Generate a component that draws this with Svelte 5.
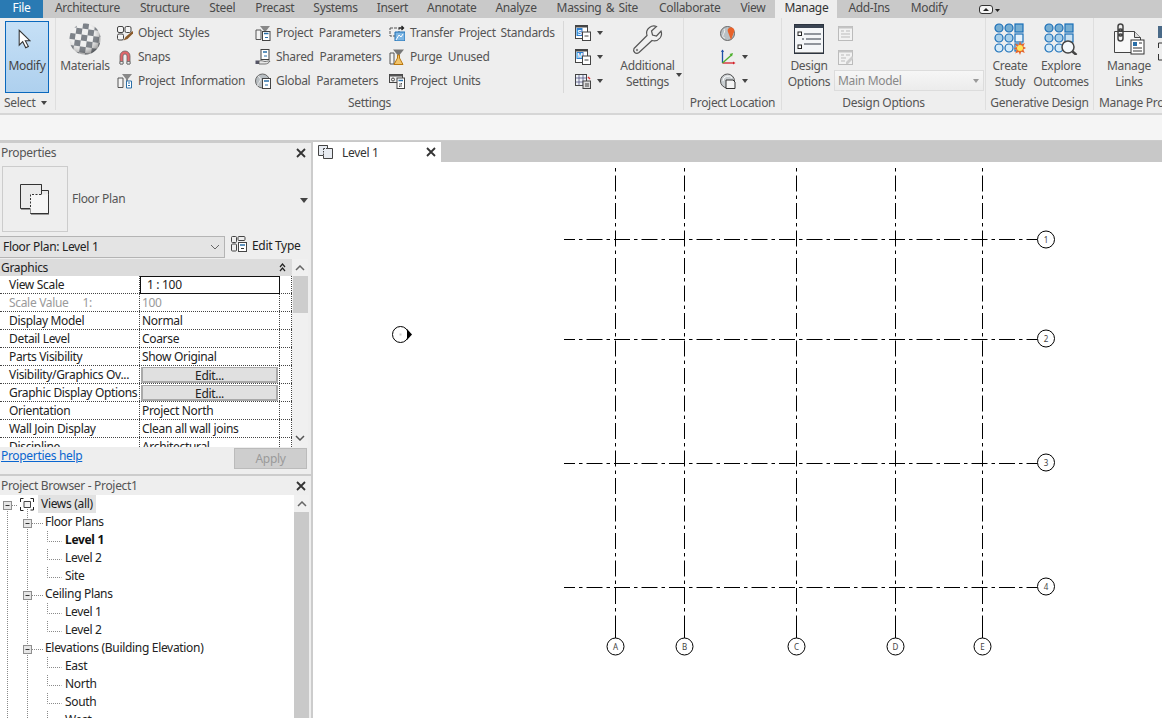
<script>
  const tabs = [
    {t:'Architecture'},{t:'Structure'},{t:'Steel'},{t:'Precast'},{t:'Systems',n:-1},{t:'Insert',n:-1},{t:'Annotate',n:-1},
    {t:'Analyze',n:-1},{t:'Massing & Site',wide:true},{t:'Collaborate',n:1},{t:'View'},{t:'Manage'},{t:'Add-Ins',n:1},{t:'Modify',n:1}
  ];
  const rows = [
    {k:'View Scale', v:'1 : 100', kind:'active'},
    {k:'Scale Value     1:', v:'100', kind:'off'},
    {k:'Display Model', v:'Normal'},
    {k:'Detail Level', v:'Coarse'},
    {k:'Parts Visibility', v:'Show Original'},
    {k:'Visibility/Graphics Ov...', v:'Edit...', kind:'btn'},
    {k:'Graphic Display Options', v:'Edit...', kind:'btn'},
    {k:'Orientation', v:'Project North'},
    {k:'Wall Join Display', v:'Clean all wall joins'},
    {k:'Discipline', v:'Architectural'}
  ];
  const tree = [
    {t:'Views (all)', l:0},{t:'Floor Plans', l:1},{t:'Level 1', l:2, b:true},{t:'Level 2', l:2},{t:'Site', l:2},
    {t:'Ceiling Plans', l:1},{t:'Level 1', l:2},{t:'Level 2', l:2},{t:'Elevations (Building Elevation)', l:1},
    {t:'East', l:2},{t:'North', l:2},{t:'South', l:2},{t:'West', l:2}
  ];
  const gridX = [615.5,684.5,796.5,895.5,982.5];
  const gridLetters = ['A','B','C','D','E'];
  const gridY = [{y:239.5,cy:239,n:'1'},{y:339.5,cy:338,n:'2'},{y:463.5,cy:462,n:'3'},{y:587.5,cy:586,n:'4'}];
  const cy = i => 9 + 18 * i;
  const leafs = tree.map((r,i)=>({...r,i})).filter(r=>r.l===2);
  const toggles = tree.map((r,i)=>({...r,i})).filter(r=>r.l===1);
</script>

<div class="app">
  <nav class="tabs">
    <div class="file">File</div>
    {#each tabs as t}
      <div class="tab" class:on={t.t==='Manage'} class:wide={t.wide} style:margin-left={t.n ? t.n + 'px' : null}>{t.t}</div>
    {/each}
    <div class="qa">
      <svg width="22" height="12" viewBox="0 0 22 12"><rect x="1.500" y="1.500" width="13" height="8" rx="2.500" fill="#f4f4f4" stroke="#333"/><path d="M5 7l3-3 3 3z" fill="#222"/><path d="M17 5h5l-2.500 3z" fill="#222"/></svg>
    </div>
  </nav>

  <section class="ribbon">
    <div class="group g-select">
      <div class="body">
        <div class="modify">
          <svg width="14" height="21" viewBox="0 0 16 24"><path d="M2.500 1.500v17l4-4 3.500 7 3-1.500-3.500-6.500h5.500z" fill="#fff" stroke="#333" stroke-width="1.200"/></svg>
          <span>Modify</span>
        </div>
      </div>
      <div class="label sel">Select <i class="arr"></i></div>
    </div>

    <div class="group g-settings">
      <div class="body">
        <div class="big materials">
          <svg width="32" height="32" viewBox="0 0 32 32">
            <defs>
              <pattern id="chk" width="12" height="12" patternUnits="userSpaceOnUse" patternTransform="rotate(8 16 16)"><rect width="12" height="12" fill="#eee"/><rect width="6" height="6" fill="#666c74"/><rect x="6" y="6" width="6" height="6" fill="#666c74"/></pattern>
              <radialGradient id="shade" cx=".4" cy=".35" r=".7"><stop offset=".5" stop-color="#fff" stop-opacity=".15"/><stop offset="1" stop-color="#333" stop-opacity=".55"/></radialGradient>
            </defs>
            <circle cx="16" cy="16" r="15.500" fill="url(#chk)"/><circle cx="16" cy="16" r="15.500" fill="url(#shade)"/>
          </svg>
          <span>Materials</span>
        </div>

        <div class="col c1">
          <div class="item">
            <svg class="ic" viewBox="0 0 16 16"><rect x=".5" y="1.500" width="6" height="6" rx="1.500" fill="#f5f5f5" stroke="#444"/><rect x="8" y="1.500" width="6" height="6" rx="1.500" fill="#f5f5f5" stroke="#444"/><rect x=".5" y="9" width="6" height="6" rx="1.500" fill="#f5f5f5" stroke="#444"/><path d="M15.500 6l-7 6-2 3.500 4-1.500 6-6z" fill="#8a5a2a"/></svg>
            <span>Object Styles</span>
          </div>
          <div class="item">
            <svg class="ic" viewBox="0 0 16 16"><path d="M3 15V7a5 5 0 0 1 10 0v8h-3V7a2 2 0 0 0-4 0v8z" fill="#e0676b" stroke="#666" stroke-width=".8"/><path d="M3 15h3v-2.500H3zM10 15h3v-2.500h-3z" fill="#eee" stroke="#666" stroke-width=".8"/></svg>
            <span>Snaps</span>
          </div>
          <div class="item">
            <svg class="ic" viewBox="0 0 16 16"><path d="M1 5h5v9.500H1z" fill="#f3f3f3" stroke="#555"/><path d="M5 1h10l-4 5v3H9V6z" fill="#888"/><path d="M9.500 8h5v7h-5z" fill="#fff" stroke="#2a6fa8"/><path d="M11 10h2M11 12.500h2" stroke="#2a6fa8"/></svg>
            <span>Project Information</span>
          </div>
        </div>

        <div class="col c2">
          <div class="item">
            <svg class="ic" viewBox="0 0 16 16"><path d="M1 5h5v9.500H1z" fill="#f3f3f3" stroke="#555"/><path d="M5 1h10l-4 5H9z" fill="#888"/><rect x="7.500" y="6.500" width="7.500" height="9" fill="#fff" stroke="#444"/><path d="M9 8.500h4.500" stroke="#2a6fa8" stroke-width="1.500"/><path d="M10 12.500h3" stroke="#2a6fa8"/></svg>
            <span>Project Parameters</span>
          </div>
          <div class="item">
            <svg class="ic" viewBox="0 0 16 16"><rect x="6" y=".5" width="8" height="10" fill="#fff" stroke="#444"/><path d="M8 3h4" stroke="#2a6fa8" stroke-width="1.500"/><path d="M9 7h3" stroke="#2a6fa8"/><path d="M.5 11.500h3.500v3.500H.5z" fill="#556" /><path d="M4 12c3-1 4 .5 6 .5s4-1 5-.5c-1 2-3 3-5 3H4z" fill="#e8e8e8" stroke="#555" stroke-width=".8"/></svg>
            <span>Shared Parameters</span>
          </div>
          <div class="item">
            <svg class="ic" viewBox="0 0 16 16"><circle cx="7.500" cy="8" r="7" fill="#b8bec2" stroke="#666"/><path d="M3 3c2 1 3 3 2 5S2 11 3 13" stroke="#eee" fill="none"/><rect x="7.500" y="5.500" width="8" height="10" fill="#fff" stroke="#444"/><path d="M9 8h5" stroke="#2a6fa8" stroke-width="1.500"/><path d="M10 12h3" stroke="#2a6fa8"/></svg>
            <span>Global Parameters</span>
          </div>
        </div>

        <div class="col c3">
          <div class="item">
            <svg class="ic" viewBox="0 0 16 16"><path d="M1 3h9v8H1z" fill="#eee" stroke="#555" stroke-dasharray="3 1"/><path d="M6 7h10v9H6z" fill="#7db6e4" stroke="#1f6fb2"/><path d="M7 15l3-5 2 2 2-3" stroke="#fff" fill="none"/><path d="M10 3h4M12.500 1l2 2-2 2" stroke="#222" fill="none" stroke-width="1.300"/></svg>
            <span>Transfer Project Standards</span>
          </div>
          <div class="item">
            <svg class="ic" viewBox="0 0 16 16"><path d="M1 4h4v11H1z" fill="#f3f3f3" stroke="#555"/><path d="M4 .5h11l-4.500 5.500h-2z" fill="#777"/><path d="M8.500 6h2v3l3.500 6.500H5L8.500 9z" fill="#f2c46a" stroke="#b9770e"/></svg>
            <span>Purge Unused</span>
          </div>
          <div class="item">
            <svg class="ic" viewBox="0 0 16 16"><rect x=".5" y="1.500" width="13" height="8" fill="#eee" stroke="#444"/><path d="M.5 1.500h13v2H.5z" fill="#555"/><circle cx="4" cy="6.500" r="1.500" fill="none" stroke="#444"/><rect x="8" y="5" width="7.500" height="10.500" fill="#fff" stroke="#444"/><path d="M9.500 7.500h4.500" stroke="#2a6fa8" stroke-width="1.500"/><path d="M10 11h3l-1-1M13 13h-3l1 1" stroke="#333" fill="none" stroke-width=".8"/></svg>
            <span>Project Units</span>
          </div>
        </div>

        <div class="sep"></div>

        <div class="col c4">
          <div class="item">
            <svg class="ic" viewBox="0 0 16 16"><rect x=".5" y=".5" width="12" height="13" fill="#fff" stroke="#444"/><path d="M.5.500h12v2H.5z" fill="#444"/><rect x="1.500" y="3" width="6" height="8" fill="#2f7fd0"/><text x="4.500" y="10" class="ltr">S</text><rect x="7.500" y="7" width="8" height="8.500" fill="#fff" stroke="#444"/><path d="M9.500 11h4" stroke="#444"/></svg>
            <i class="arr"></i>
          </div>
          <div class="item">
            <svg class="ic" viewBox="0 0 16 16"><rect x=".5" y=".5" width="12" height="13" fill="#fff" stroke="#444"/><path d="M.5.500h12v2H.5z" fill="#444"/><rect x="1.500" y="3" width="7" height="7" fill="#2f7fd0"/><text x="5" y="9" class="ltr">M</text><rect x="7.500" y="7" width="8" height="8.500" fill="#fff" stroke="#444"/><path d="M9.500 11h4" stroke="#444"/></svg>
            <i class="arr"></i>
          </div>
          <div class="item">
            <svg class="ic" viewBox="0 0 16 16"><rect x=".5" y="1.500" width="11" height="11" fill="#eef3f8" stroke="#444"/><path d="M.5 5h11M4 2v10M8 2v10M.5 9h11" stroke="#447" stroke-width=".7"/><rect x="8" y="8" width="7.500" height="7.500" fill="#ddd" stroke="#444"/><path d="M10 11h4M10 13h4" stroke="#444"/><path d="M13 4l2 2" stroke="#d33" stroke-width="1.500"/></svg>
            <i class="arr"></i>
          </div>
        </div>

        <div class="big additional">
          <svg width="32" height="30" viewBox="0 0 32 30"><path d="M2 24.500L15 11.500c-1-3 0-6 2.500-8 2-1.500 4.500-2 7-1l-5 4.500 1 4 4 1 4.500-5c1 2.500.5 5-1 7-2 2.500-5 3.500-8 2.500L7 28.500c-1.500 1-3 1-4.300 0-1.200-1.300-1.200-3 -.7-4z" fill="#f0f0f0" stroke="#555" stroke-width="1.200"/><circle cx="5" cy="26" r="1.200" fill="#888"/></svg>
          <span>Additional<br>Settings</span>
          <i class="arr add"></i>
        </div>
      </div>
      <div class="label">Settings</div>
    </div>

    <div class="group g-loc">
      <div class="body">
        <div class="col">
          <div class="item">
            <svg class="ic" viewBox="0 0 16 16"><circle cx="7.500" cy="8.500" r="7" fill="#b9c0c4" stroke="#666"/><path d="M4 4c1.500 2 0 4-1 6s1 3 2 3" stroke="#eee" fill="none"/><path d="M11 15L8 7a3.300 3.300 0 1 1 6 0z" fill="#e8622a"/></svg>
          </div>
          <div class="item">
            <svg class="ic" viewBox="0 0 16 16"><path d="M2.500 1v13" stroke="#1d4fa8" stroke-width="1.300"/><path d="M1 3l1.500-2.500L4 3z" fill="#1d4fa8"/><path d="M2.500 14H14" stroke="#d4222a" stroke-width="1.300"/><path d="M13 12.500l2.500 1.500-2.500 1.500z" fill="#d4222a"/><path d="M2.500 14l9-8" stroke="#4cb02c" stroke-width="1.300"/><path d="M9.500 5l3.500-1-1 3.500z" fill="#4cb02c"/></svg>
            <i class="arr"></i>
          </div>
          <div class="item">
            <svg class="ic" viewBox="0 0 16 16"><circle cx="7.500" cy="8" r="7" fill="#c8cdd0" stroke="#555"/><path d="M3 8a5 5 0 0 1 9-3" fill="none" stroke="#fff"/><path d="M6 7h7l2 2v6.500H6z" fill="#f4f4f4" stroke="#333"/></svg>
            <i class="arr"></i>
          </div>
        </div>
      </div>
      <div class="label">Project Location</div>
    </div>

    <div class="group g-design">
      <div class="body">
        <div class="big design">
          <svg width="30" height="30" viewBox="0 0 30 30"><rect x=".5" y=".5" width="29" height="29" fill="#f4f6f8" stroke="#2c3440"/><path d="M1 1h28v3H1z" fill="#3a4452"/><path d="M1 28h28v1H1z" fill="#888"/><rect x="4" y="8" width="3.500" height="3.500" fill="#fff" stroke="#222"/><rect x="4" y="21" width="3.500" height="3.500" fill="#fff" stroke="#222"/><path d="M10 10h17M8 15h2M12 15h15M10 20h17" stroke="#2c3440" stroke-width="1.200"/></svg>
          <span>Design<br>Options</span>
        </div>
        <div class="dcol">
          <div class="dicons">
            <svg class="ic small" viewBox="0 0 15 15"><rect x=".5" y=".5" width="14" height="14" fill="#f2f2f2" stroke="#bbb"/><path d="M.5.500h14v2H.5z" fill="#c4c4c4"/><path d="M3 5h3M8 5h4M3 8h9M3 11h9" stroke="#bbb"/></svg>
            <svg class="ic small" viewBox="0 0 15 15"><rect x=".5" y=".5" width="14" height="14" fill="#f2f2f2" stroke="#bbb"/><path d="M.5.500h14v2H.5z" fill="#c4c4c4"/><path d="M3 5h3M8 5h4M3 8h5M3 11h4" stroke="#bbb"/><path d="M14 6l-6 6v2h2l6-6z" fill="#ccc"/></svg>
          </div>
          <div class="combo"><span>Main Model</span><i class="arr gray"></i></div>
        </div>
      </div>
      <div class="label">Design Options</div>
    </div>

    <div class="group g-gen">
      <div class="body">
        <div class="big study">
          <svg width="32" height="32" viewBox="0 0 32 32">
            <g stroke="#1a6fb8" stroke-width="1.200">
              <circle cx="5" cy="5" r="4" fill="#77aed2"/><circle cx="15" cy="5" r="4" fill="#77aed2"/><rect x="21" y="1" width="8" height="8" fill="#77aed2"/>
              <circle cx="5" cy="15" r="4" fill="#a9d0ea"/><circle cx="15" cy="15" r="4" fill="#a9d0ea"/><rect x="21" y="11" width="8" height="8" fill="#e6f2fb"/>
              <circle cx="5" cy="25" r="4" fill="#d5eaf8"/><circle cx="15" cy="25" r="4" fill="#d5eaf8"/><rect x="21" y="21" width="7" height="7" fill="#f2f9ff"/>
            </g>
            <path d="M26 18l1.300 3.500 3.500-1.500-1.500 3.500 2.700 1.500-2.700 1.500 1.500 3.500-3.500-1.500L26 32l-1.300-3-3.500 1.500 1.500-3.500-2.700-1.500 2.700-1.500-1.500-3.500 3.500 1.500z" fill="#e8662a"/><circle cx="26" cy="25" r="3" fill="#ffe65a"/>
          </svg>
          <span>Create<br>Study</span>
        </div>
        <div class="big explore">
          <svg width="34" height="32" viewBox="0 0 34 32">
            <g stroke="#1a6fb8" stroke-width="1.200">
              <circle cx="5" cy="5" r="4" fill="#77aed2"/><circle cx="15" cy="5" r="4" fill="#77aed2"/><rect x="21" y="1" width="8" height="8" fill="#77aed2"/>
              <circle cx="5" cy="15" r="4" fill="#a9d0ea"/><circle cx="15" cy="15" r="4" fill="#a9d0ea"/><rect x="21" y="11" width="8" height="8" fill="#c9e2f3"/>
              <circle cx="5" cy="25" r="4" fill="#d5eaf8"/><circle cx="15" cy="25" r="4" fill="#d5eaf8"/><rect x="21" y="21" width="7" height="7" fill="#f2f9ff"/>
            </g>
            <circle cx="24" cy="24" r="6" fill="#f4f8fb" stroke="#444" stroke-width="1.500"/><path d="M28.500 28.500l4 3.500" stroke="#444" stroke-width="2.500"/>
          </svg>
          <span>Explore<br>Outcomes</span>
        </div>
      </div>
      <div class="label">Generative Design</div>
    </div>

    <div class="group g-manage">
      <div class="body">
        <div class="big links">
          <svg width="32" height="32" viewBox="0 0 32 32"><path d="M1.500 8.500h20l6 6v15h-26z" fill="#f8f8f8" stroke="#444"/><path d="M21.500 8.500v6h6" fill="#ddd" stroke="#444"/><rect x="5" y="1" width="5" height="7" rx="2.500" fill="none" stroke="#444" stroke-width="1.500"/><rect x="5" y="6" width="5" height="7" rx="2.500" fill="none" stroke="#444" stroke-width="1.500"/><rect x="5" y="11" width="5" height="7" rx="2.500" fill="none" stroke="#444" stroke-width="1.500"/><rect x="18" y="17" width="13" height="14" fill="#fff" stroke="#333"/><rect x="20" y="19" width="4" height="4" fill="#2a6fa8"/><path d="M26 20h3M20 25h9M20 28h9" stroke="#333"/></svg>
          <span>Manage<br>Links</span>
        </div>
        <div class="peek">
          <svg width="6" height="42" viewBox="0 0 6 42"><rect x="0" y="0" width="6" height="12" fill="#4a6a88"/><path d="M.5 22v-5h5M.5 28v6h5" fill="none" stroke="#333"/></svg>
        </div>
      </div>
      <div class="label">Manage Project</div>
    </div>
  </section>

  <div class="options"></div>

  <main class="main">
    <aside class="left">
      <section class="props">
        <header class="title"><span>Properties</span>
          <svg class="x" width="10" height="10" viewBox="0 0 10 10"><path d="M1 1l8 8M9 1l-8 8" stroke="#333" stroke-width="1.800"/></svg>
        </header>
        <div class="selector">
          <div class="thumb">
            <svg width="32" height="32" viewBox="0 0 32 32">
              <path d="M1.500 1.500h21v6h7v23h-18v-5h-10z" fill="#eaeaea" stroke="#333"/>
              <path d="M11.500 11.500h18v19h-18z" fill="#f6f6f6"/>
              <path d="M22.500 1.500v10M29.500 11.500v19h-18" fill="none" stroke="#333"/>
              <path d="M22 11.500h-10.500v14" fill="none" stroke="#333" stroke-dasharray="2 1.500"/>
              <path d="M2 26.500h9M12 31.500h18" stroke="#999"/>
            </svg>
          </div>
          <span>Floor Plan</span>
          <i class="arr sel-arr"></i>
        </div>
        <div class="typerow">
          <div class="typecombo"><span>Floor Plan: Level 1</span>
            <svg width="10" height="6" viewBox="0 0 10 6"><path d="M1 1l4 4 4-4" fill="none" stroke="#666"/></svg>
          </div>
          <div class="edittype">
            <svg width="16" height="16" viewBox="0 0 16 16"><rect x=".5" y=".5" width="5" height="6" rx="1" fill="#eee" stroke="#444"/><rect x="7" y=".5" width="7" height="4" rx="1" fill="#eee" stroke="#444"/><rect x=".5" y="8" width="5" height="7" rx="1" fill="#eee" stroke="#444"/><rect x="7.500" y="6.500" width="8" height="9" fill="#fff" stroke="#444"/><path d="M9 9h5" stroke="#2a6fa8" stroke-width="1.500"/><path d="M10 12.500h3" stroke="#333"/></svg>
            <span>Edit Type</span>
          </div>
        </div>
        <div class="gridwrap">
          <div class="grid">
            <div class="ghead"><span>Graphics</span><svg width="7" height="9" viewBox="0 0 7 9"><path d="M1 4l2.500-3L6 4M1 8l2.500-3L6 8" fill="none" stroke="#222" stroke-width="1.200"/></svg></div>
            {#each rows as r}
              <div class="grow">
                <div class="kc" class:off={r.kind==='off'}>{r.k}</div>
                {#if r.kind==='btn'}
                  <div class="vc"><div class="edit">{r.v}</div></div>
                {:else}
                  <div class="vc" class:active={r.kind==='active'} class:off={r.kind==='off'}>{r.v}</div>
                {/if}
                <div class="xc"></div>
              </div>
            {/each}
          </div>
          <div class="sbar pscroll">
            <svg class="up" width="10" height="6" viewBox="0 0 10 6"><path d="M1 5l4-4 4 4" fill="none" stroke="#666" stroke-width="1.500"/></svg>
            <div class="thumbbar"></div>
            <svg class="down" width="10" height="6" viewBox="0 0 10 6"><path d="M1 1l4 4 4-4" fill="none" stroke="#555" stroke-width="1.500"/></svg>
          </div>
        </div>
        <div class="pfoot">
          <a href="#help" class="help">Properties help</a>
          <div class="apply">Apply</div>
        </div>
      </section>

      <section class="browser">
        <header class="title b"><span>Project Browser - Project1</span>
          <svg class="x" width="10" height="10" viewBox="0 0 10 10"><path d="M1 1l8 8M9 1l-8 8" stroke="#333" stroke-width="1.800"/></svg>
        </header>
        <div class="treewrap">
          <div class="tree">
            <svg class="guides" width="294" height="224" viewBox="0 0 294 224">
              <g stroke="#8a8a8a" stroke-dasharray="1 1" fill="none">
                <path d="M7.500 14V224M27.500 14V224"/>
                <path d="M12 10.500h6"/>
                {#each toggles as t}<path d="M32 {cy(t.i)+1.5}h11"/>{/each}
                {#each leafs as t}<path d="M47.500 {cy(t.i)-9}v10.500h14"/>{/each}
              </g>
              <rect x="3.500" y="6.500" width="8" height="8" fill="#e6e6e6" stroke="#8f8f8f"/><path d="M5.500 10.500h4" stroke="#333"/>
              {#each toggles as t}
                <rect x="23.500" y={cy(t.i)-2.5} width="8" height="8" fill="#e6e6e6" stroke="#8f8f8f"/><path d="M25.500 {cy(t.i)+1.500}h4" stroke="#333"/>
              {/each}
              <path d="M20.500 7V3.500h3M30.500 3.500h3V7M33.500 12v3h-3M23.500 15.500h-3V12" fill="none" stroke="#222"/>
              <path d="M24 6.500h6.500v6H24z" fill="#f4f4f4" stroke="#444"/>
            </svg>
            {#each tree as r, i}
              <div class="trow l{r.l}" class:bold={r.b}><span class:sel={i===0}>{r.t}</span></div>
            {/each}
          </div>
          <div class="sbar bscroll">
            <svg class="up" width="10" height="6" viewBox="0 0 10 6"><path d="M1 5l4-4 4 4" fill="none" stroke="#666" stroke-width="1.500"/></svg>
            <div class="bthumb"></div>
          </div>
        </div>
      </section>
    </aside>

    <div class="view">
      <div class="vtabs">
        <div class="vtab">
          <svg width="16" height="14" viewBox="0 0 16 14">
            <path d="M.5 .5h9v3h5v10h-9v-3h-5z" fill="#e8ecf2" stroke="#444"/>
            <path d="M5.500 3.500h4M5.500 3.500v7" fill="none" stroke="#444" stroke-dasharray="1.500 1"/>
            <path d="M9.500 .5v3" stroke="#444"/>
          </svg>
          <span>Level 1</span>
          <svg class="x" width="10" height="10" viewBox="0 0 10 10"><path d="M1 1l8 8M9 1l-8 8" stroke="#333" stroke-width="1.800"/></svg>
        </div>
      </div>
      <div class="canvas">
        <svg width="849" height="556" viewBox="313 162 849 556">
          <g stroke="#000" fill="none">
            {#each gridX as x}
              <path d="M{x} 168V620" stroke-dasharray="16 4 3.500 4" stroke-dashoffset="20"/>
              <path d="M{x} 618V638"/>
            {/each}
            {#each gridY as g}
              <path d="M564 {g.y}H1037.500" stroke-dasharray="16 4 3.500 4" stroke-dashoffset="5"/>
            {/each}
            {#each gridX as x}<circle cx={x} cy="646.500" r="8.500" fill="#fff"/>{/each}
            {#each gridY as g}<circle cx="1046" cy={g.cy+.5} r="8.500" fill="#fff"/>{/each}
            <circle cx="400.500" cy="334.500" r="8" fill="#fff"/>
          </g>
          <path d="M407 329l5 5.500-5 5.500z" fill="#000"/>
          <rect x="399.500" y="333.500" width="2" height="2" fill="#ccc"/>
          <g class="bub">
            {#each gridX as x, i}<text x={x} y="649.500">{gridLetters[i]}</text>{/each}
            {#each gridY as g}<text x="1046" y={g.cy+3.5}>{g.n}</text>{/each}
          </g>
        </svg>
      </div>
    </div>
  </main>
</div>

<style>
  :global(body) { margin: 0; background: #fff; }
  .app { width: 1162px; height: 718px; overflow: hidden; display: flex; flex-direction: column; font: 12px/16px "Noto Sans", "Noto Sans CJK KR", sans-serif; letter-spacing: -.32px; color: #444; }
  svg { display: block; flex: none; }
  .ltr { font: 700 7px "Liberation Sans", sans-serif; fill: #fff; text-anchor: middle; letter-spacing: 0; }

  .tabs { height: 18px; background: #c9c9c9; display: flex; flex: none; align-items: center; white-space: nowrap; }
  .file { width: 43px; height: 18px; line-height: 16px; background: #2a7ab3; color: #fff; text-align: center; margin-right: 2px; }
  .tab { padding: 0 10px; height: 18px; line-height: 16px; color: #4a4a4a; }
  .tab.wide { word-spacing: 1.500px; }
  .tab.on { background: #eee; color: #333; padding: 0 9px; }
  .qa { margin-left: 20px; padding-top: 2px; }

  .ribbon { height: 95px; flex: none; background: #eee; border-bottom: 2px solid #d6d6d6; box-sizing: content-box; display: flex; overflow: hidden; }
  .group { flex: none; display: flex; flex-direction: column; height: 92px; box-sizing: border-box; border-right: 1px solid #dedede; }
  .body { height: 77px; display: flex; flex: none; }
  .label { height: 15px; text-align: center; white-space: nowrap; color: #555; }
  .arr { display: inline-block; width: 0; height: 0; border: 3.500px solid transparent; border-top: 4px solid #444; border-bottom: 0; }
  .arr.gray { border-top-color: #999; }

  .g-select { width: 56px; }
  .modify { margin: 3px 0 0 5px; width: 44px; height: 72px; box-sizing: border-box; border: 1px solid #0a68bd; background: linear-gradient(#c6e0f6, #aed0ee); display: flex; flex-direction: column; align-items: center; }
  .modify svg { margin: 7px 6px 8px 0; }
  .modify span { color: #444; }
  .label.sel { text-align: left; padding-left: 4px; display: flex; align-items: center; gap: 6px; }

  .g-settings { width: 628px; }
  .big { flex: none; display: flex; flex-direction: column; align-items: center; text-align: center; position: relative; white-space: nowrap; color: #555; }
  .big svg { margin-top: 5px; height: 32px; margin-bottom: 3px; }
  .materials { width: 50px; margin-left: 4px; }
  .col { flex: none; display: flex; flex-direction: column; padding-top: 3px; }
  .item { height: 24px; display: flex; align-items: center; gap: 5px; white-space: nowrap; word-spacing: 3px; color: #555; }
  .ic { width: 16px; height: 16px; }
  .c1 { width: 138px; margin-left: 7px; }
  .c2 { width: 134px; }
  .c3 { width: 174px; }
  .c3 .item:first-child { word-spacing: 2px; }
  .sep { width: 1px; height: 72px; margin-top: 3px; background: #d8d8d8; flex: none; }
  .c4 { width: 44px; margin-left: 11px; }
  .c4 .item, .g-loc .item { gap: 6px; }
  .additional { width: 57px; margin-right: 4px; }
  .arr.add { position: absolute; right: -6px; top: 55px; }

  .g-loc { width: 98px; }
  .g-loc .col { margin-left: 36px; }

  .g-design { width: 204px; }
  .design { width: 52px; margin-left: 1px; }
  .design svg { margin: 6px 0 4px; height: 30px; }
  .dcol { display: flex; flex-direction: column; margin-left: -1px; }
  .dicons { height: 49px; padding: 8px 0 0 4px; box-sizing: border-box; display: flex; flex-direction: column; gap: 9px; }
  .small { width: 15px; height: 15px; }
  .combo { width: 150px; height: 21px; margin-top: 3px; box-sizing: border-box; border: 1px solid #dcdcdc; background: linear-gradient(#f6f6f6, #ececec); display: flex; align-items: center; justify-content: space-between; padding: 0 4px 0 3px; color: #888; }

  .g-gen { width: 108px; }
  .study { width: 48px; }
  .explore { width: 54px; }
  .g-manage { flex: 1; border-right: 0; min-width: 0; }
  .g-manage .label { text-align: left; padding-left: 5px; }
  .links { width: 60px; margin-left: 5px; }
  .peek { margin: 8px 0 0 -1px; }

  .options { height: 25px; flex: none; background: #f5f5f5; }

  .main { flex: 1; min-height: 0; display: flex; border-top: 1px solid #ccc; background: #ccc; }
  .left { width: 311px; flex: none; margin-right: 2px; padding-top: 2px; display: flex; flex-direction: column; overflow: hidden; }
  .props { height: 331px; flex: none; background: #eee; display: flex; flex-direction: column; }
  .title { height: 20px; flex: none; padding: 0 5px 0 1px; display: flex; align-items: center; justify-content: space-between; color: #555; white-space: nowrap; }
  .title.b { height: 19px; }
  .selector { height: 66px; flex: none; margin: 3px 0 0 2px; display: flex; align-items: center; position: relative; color: #555; }
  .thumb { width: 64px; height: 64px; border: 1px solid #ccc; display: flex; align-items: center; justify-content: center; margin-right: 4px; }
  .sel-arr { position: absolute; right: 3px; top: 32px; border-width: 4px; border-top-width: 5px; border-bottom: 0; }
  .typerow { height: 22px; margin-top: 4px; flex: none; display: flex; }
  .typecombo { width: 225px; height: 22px; box-sizing: border-box; border: 1px solid #b4b4b4; border-left: 0; background: #e4e4e4; display: flex; align-items: center; justify-content: space-between; padding: 0 4px 0 3px; color: #222; }
  .edittype { display: flex; align-items: flex-start; gap: 5px; margin-left: 6px; color: #222; line-height: 20px; }
  .gridwrap { height: 188px; margin-top: 1px; flex: none; display: flex; overflow: hidden; }
  .grid { width: 292px; flex: none; background: #fff; color: #222; }
  .ghead { height: 17px; background: #dcdcdc; display: flex; align-items: center; justify-content: space-between; padding: 0 6px 0 1px; box-sizing: border-box; }
  .grow { display: flex; height: 18px; box-sizing: border-box; border-bottom: 1px dotted #444; line-height: 17px; white-space: pre; }
  .kc { width: 140px; box-sizing: border-box; padding-left: 9px; border-right: 1px dotted #444; overflow: hidden; flex: none; }
  .vc { width: 140px; box-sizing: border-box; padding-left: 2px; flex: none; border-right: 1px dotted #444; }
  .xc { width: 12px; box-sizing: border-box; flex: none; border-right: 1px dotted #444; }
  .off { color: #9a9a9a; }
  .vc.active { border: 1px solid #111; padding-left: 6px; height: 18px; line-height: 16px; background: #fff; margin-bottom: -1px; color: #222; }
  .edit { margin: 1px 0 0 -1px; width: 137px; height: 16px; box-sizing: border-box; border: 2px solid #a9a9a9; border-top-width: 1px; background: #e0e0e0; text-align: center; line-height: 15px; }
  .sbar { background: #f0f0f0; position: relative; display: flex; flex-direction: column; align-items: center; }
  .pscroll { width: 16px; }
  .up { margin-top: 6px; margin-bottom: 5px; }
  .thumbbar { width: 15px; height: 37px; background: #cdcdcd; }
  .down { margin-top: auto; margin-bottom: 6px; }
  .pfoot { flex: none; height: 26px; display: flex; justify-content: space-between; padding: 1px 4px 0 1px; }
  .help { color: #0a66d0; text-decoration: underline; line-height: 16px; }
  .apply { width: 73px; height: 21px; box-sizing: border-box; border: 1px solid #bbb; background: #cecece; color: #9a9a9a; text-align: center; line-height: 20px; }

  .browser { flex: 1; margin-top: 2px; background: #eee; display: flex; flex-direction: column; min-height: 0; }
  .treewrap { flex: 1; min-height: 0; display: flex; }
  .tree { width: 294px; flex: none; background: #fff; position: relative; color: #222; white-space: nowrap; overflow: hidden; }
  .guides { position: absolute; left: 0; top: 0; }
  .trow { height: 18px; line-height: 18px; position: relative; }
  .l0 { padding-left: 38px; }
  .l0 span { display: inline-block; padding: 0 3px; background: #e2e2e2; }
  .l1 { padding-left: 45px; }
  .l2 { padding-left: 65px; }
  .bold { font-weight: 700; color: #111; }
  .bscroll { width: 15px; }
  .bthumb { width: 15px; flex: 1; background: #c9c9c9; }

  .view { flex: 1; min-width: 0; display: flex; flex-direction: column; background: #fff; }
  .vtabs { height: 21px; flex: none; background: #c8c8c8; display: flex; }
  .vtab { width: 128px; box-sizing: border-box; background: #fff; margin-top: 1px; display: flex; align-items: center; padding: 0 5px; gap: 8px; color: #333; }
  .vtab span { flex: 1; padding-top: 2px; }
  .canvas { flex: 1; min-height: 0; background: #fff; }
  .bub text { font: 8px "Noto Sans", sans-serif; fill: #444; text-anchor: middle; letter-spacing: 0; }
</style>
